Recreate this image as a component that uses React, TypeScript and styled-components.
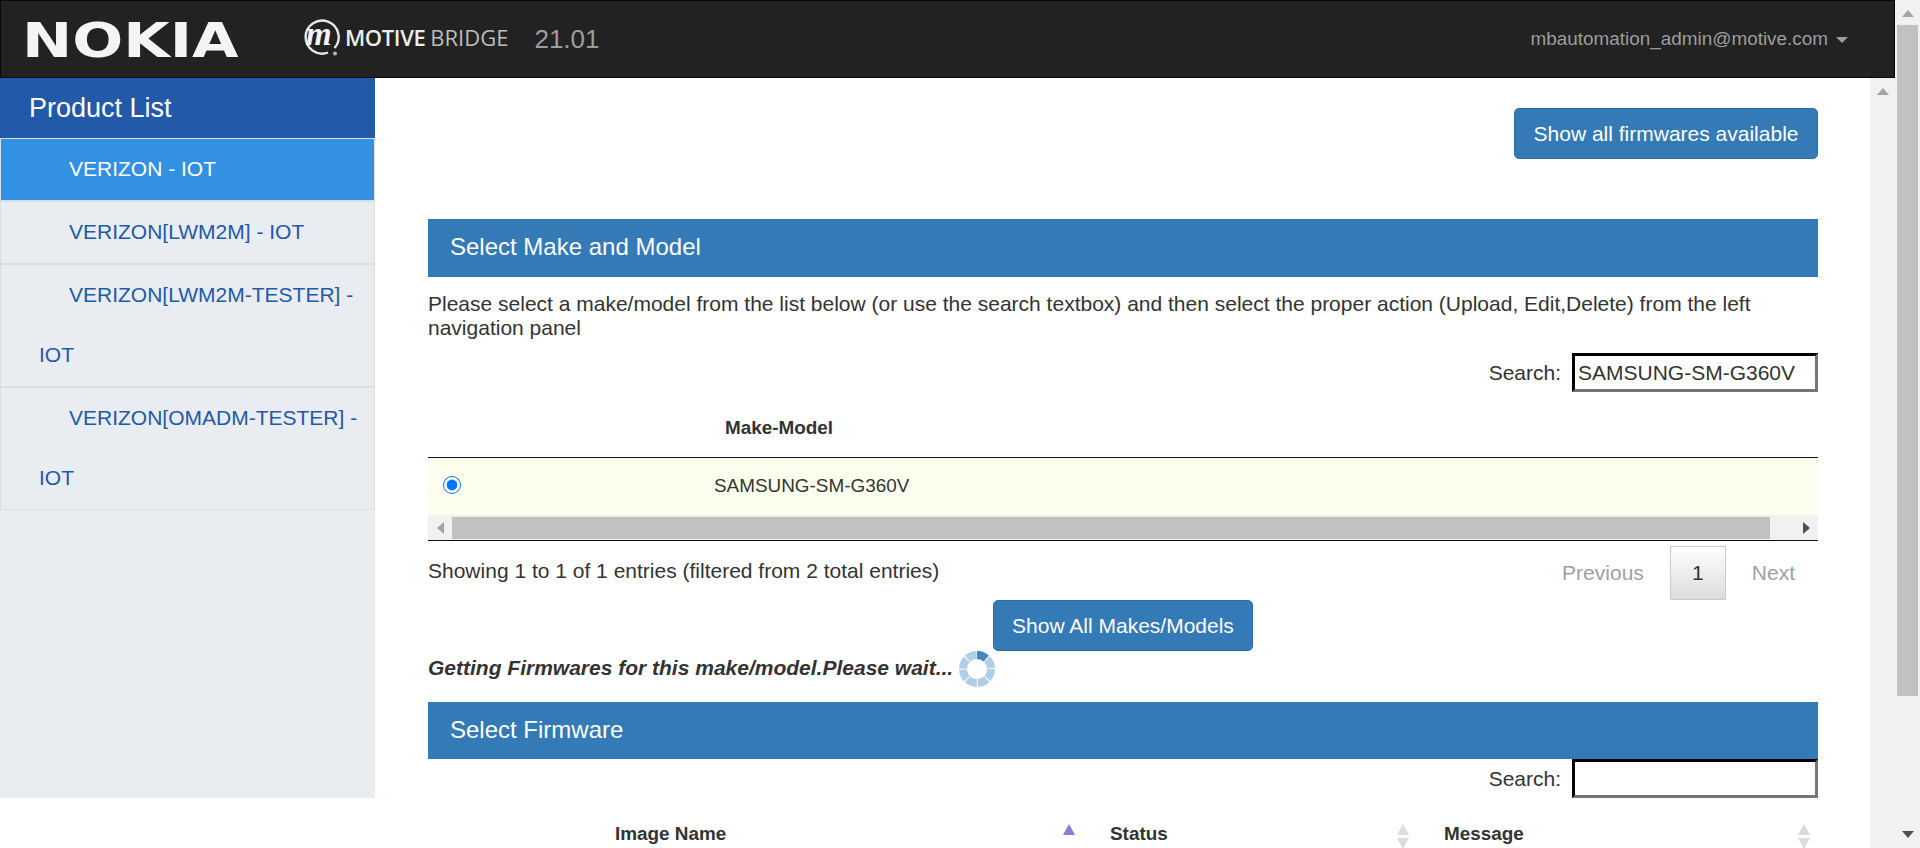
import styled, { createGlobalStyle } from 'styled-components';

const GlobalStyle = createGlobalStyle`
  html, body {
    margin: 0;
    padding: 0;
    height: 100%;
    overflow: hidden;
    background: #ffffff;
  }
  body {
    font-family: "Liberation Sans", Arial, sans-serif;
    font-size: 21px;
    color: #333333;
  }
  * {
    box-sizing: border-box;
  }
`;

const PRODUCTS = [
  'VERIZON - IOT',
  'VERIZON[LWM2M] - IOT',
  'VERIZON[LWM2M-TESTER] - IOT',
  'VERIZON[OMADM-TESTER] - IOT',
];

const FIRMWARE_COLUMNS = [
  { title: 'Image Name', active: true },
  { title: 'Status', active: false },
  { title: 'Message', active: false },
];

function MotiveMark() {
  return (
    <svg width="37" height="48" viewBox="0 -6 37 48">
      <path
        d="M31.5 27 A16.5 16.5 0 1 0 25 31.5"
        fill="none"
        stroke="#e8e8e8"
        strokeWidth="2.4"
      />
      <circle cx="32" cy="32.5" r="2" fill="#b5b5b5" />
      <text
        x="3"
        y="24"
        fill="#f4f4f4"
        fontFamily="Liberation Serif, serif"
        fontStyle="italic"
        fontWeight="700"
        fontSize="33"
      >
        m
      </text>
    </svg>
  );
}

function Spinner() {
  return (
    <svg width="36" height="36" viewBox="0 0 36 36">
      <g transform="rotate(-90 18 18)" fill="none" strokeWidth="8">
        <circle cx="18" cy="18" r="14" stroke="#afcfe7" strokeDasharray="10 0.996" />
        <circle cx="18" cy="18" r="14" stroke="#4189c3" strokeDasharray="10 77.96" />
      </g>
    </svg>
  );
}

function App() {
  return (
    <Page>
      <GlobalStyle />
      <Window>
        <Navbar>
          <Brand>
            <NokiaWord>NOKIA</NokiaWord>
            <MotiveMark />
            <MotiveWord>MOTIVE</MotiveWord>
            <BridgeWord>BRIDGE</BridgeWord>
            <Version>21.01</Version>
          </Brand>
          <UserMenu>
            mbautomation_admin@motive.com
            <Caret />
          </UserMenu>
        </Navbar>
        <Body>
          <Sidebar>
            <SidebarTitle>Product List</SidebarTitle>
            {PRODUCTS.map((name, index) => (
              <ProductItem key={name} $active={index === 0}>
                {name}
              </ProductItem>
            ))}
          </Sidebar>
          <Content>
            <TopActions>
              <Button>Show all firmwares available</Button>
            </TopActions>
            <SectionHeader $top={60} $height={58}>
              Select Make and Model
            </SectionHeader>
            <Help>
              Please select a make/model from the list below (or use the search
              textbox) and then select the proper action (Upload, Edit,Delete)
              from the left navigation panel
            </Help>
            <SearchRow $top={13}>
              Search:
              <SearchInput readOnly value="SAMSUNG-SM-G360V" />
            </SearchRow>
            <MakeHead>Make-Model</MakeHead>
            <MakeRow>
              <Radio type="radio" checked readOnly />
              <MakeCell>SAMSUNG-SM-G360V</MakeCell>
            </MakeRow>
            <TableScrollbar>
              <LeftArrowSlot>
                <Arrow $dir="left" $color="#a3a3a3" />
              </LeftArrowSlot>
              <HThumb />
              <RightArrowSlot>
                <Arrow $dir="right" $color="#505050" />
              </RightArrowSlot>
            </TableScrollbar>
            <TableFooter>
              <Info>Showing 1 to 1 of 1 entries (filtered from 2 total entries)</Info>
              <Pagination>
                <PageLink>Previous</PageLink>
                <CurrentPage>1</CurrentPage>
                <PageLink>Next</PageLink>
              </Pagination>
            </TableFooter>
            <CenterActions>
              <Button>Show All Makes/Models</Button>
            </CenterActions>
            <WaitRow>
              <WaitText>Getting Firmwares for this make/model.Please wait...</WaitText>
              <Spinner />
            </WaitRow>
            <SectionHeader $top={15} $height={57}>
              Select Firmware
            </SectionHeader>
            <SearchRow $top={0}>
              Search:
              <SearchInput readOnly value="" />
            </SearchRow>
            <FirmwareHead>
              {FIRMWARE_COLUMNS.map((column) => (
                <FirmwareColumn key={column.title}>
                  {column.title}
                  <SortIcon>
                    <SortUp $active={column.active} />
                    {!column.active && <SortDown />}
                  </SortIcon>
                </FirmwareColumn>
              ))}
            </FirmwareHead>
          </Content>
          <InnerScrollbar>
            <Arrow $dir="up" $color="#a3a3a3" />
          </InnerScrollbar>
        </Body>
      </Window>
      <OuterScrollbar>
        <Arrow $dir="up" $color="#a3a3a3" />
        <OuterThumb />
        <Arrow $dir="down" $color="#505050" />
      </OuterScrollbar>
    </Page>
  );
}

const Page = styled.div`
  display: flex;
  width: 1920px;
  height: 848px;
  overflow: hidden;
`;

const Window = styled.div`
  flex: 1;
  min-width: 0;
  display: flex;
  flex-direction: column;
`;

const Navbar = styled.header`
  height: 78px;
  flex: none;
  display: flex;
  align-items: center;
  justify-content: space-between;
  padding: 0 46px 0 25px;
  background: #222222;
  border: 1px solid #080808;
`;

const Brand = styled.div`
  display: flex;
  align-items: center;
`;

const NokiaWord = styled.span`
  width: 216px;
  margin: 2px 65px 0 -4px;
  font-family: "DejaVu Sans", sans-serif;
  font-size: 48px;
  font-weight: 700;
  line-height: 48px;
  color: #f4f4f4;
  transform: scaleX(1.25);
  transform-origin: left center;
`;

const MotiveWord = styled.span`
  margin: 0 0 4px 5px;
  font-family: "Open Sans", sans-serif;
  font-size: 22px;
  font-weight: 600;
  letter-spacing: -0.4px;
  color: #ececec;
`;

const BridgeWord = styled.span`
  margin: 0 0 4px 5px;
  font-family: "Open Sans", sans-serif;
  font-size: 22px;
  color: #bcbcbc;
`;

const Version = styled.span`
  margin-left: 26px;
  font-size: 26px;
  color: #9d9d9d;
`;

const UserMenu = styled.div`
  display: flex;
  align-items: center;
  gap: 8px;
  font-size: 18.9px;
  color: #9d9d9d;
`;

const Caret = styled.span`
  width: 0;
  height: 0;
  margin-top: 2px;
  border-top: 6px solid #9d9d9d;
  border-left: 6px solid transparent;
  border-right: 6px solid transparent;
`;

const Body = styled.div`
  flex: 1;
  min-height: 0;
  display: flex;
`;

const Sidebar = styled.nav`
  width: 375px;
  height: 720px;
  flex: none;
  background: #e9ecf1;
`;

const SidebarTitle = styled.div`
  height: 60px;
  padding-left: 29px;
  line-height: 60px;
  font-size: 27px;
  color: #ffffff;
  background: #2359a9;
`;

const ProductItem = styled.div<{ $active: boolean }>`
  padding: 0 14px 1px 38px;
  text-indent: 30px;
  font-size: 21px;
  line-height: 60px;
  color: ${(props) => (props.$active ? '#ffffff' : '#2359a9')};
  background: ${(props) => (props.$active ? '#3391e4' : '#e9ecf1')};
  border: 1px solid #dcdde0;
  border-bottom-width: 2px;
  border-top-width: ${(props) => (props.$active ? '1px' : '0')};
  &:last-child {
    border-bottom-width: 1px;
  }
`;

const Content = styled.main`
  flex: 1;
  min-width: 0;
  overflow: hidden;
  padding: 30px 52px 0 53px;
`;

const TopActions = styled.div`
  display: flex;
  justify-content: flex-end;
`;

const CenterActions = styled.div`
  display: flex;
  justify-content: center;
`;

const Button = styled.button`
  height: 51px;
  padding: 0 18.5px;
  font-family: inherit;
  font-size: 21px;
  color: #ffffff;
  background: #337ab7;
  border: 1px solid #2e6da4;
  border-radius: 5px;
`;

const SectionHeader = styled.h2<{ $top: number; $height: number }>`
  height: ${(props) => props.$height}px;
  margin: ${(props) => props.$top}px 0 0;
  padding-left: 22px;
  line-height: 55px;
  font-size: 24px;
  font-weight: 400;
  color: #ffffff;
  background: #337ab7;
`;

const Help = styled.p`
  margin: 15px 0 0;
  line-height: 24px;
`;

const SearchRow = styled.label<{ $top: number }>`
  display: flex;
  justify-content: flex-end;
  align-items: center;
  gap: 11px;
  margin-top: ${(props) => props.$top}px;
`;

const SearchInput = styled.input`
  width: 246px;
  height: 39px;
  padding: 0 3px;
  font-family: inherit;
  font-size: 21px;
  color: #333333;
  background: #ffffff;
  border: 3px inset #767676;
  border-top-color: #222222;
  border-left-color: #222222;
  outline: none;
`;

const MakeHead = styled.div`
  height: 66px;
  padding: 25px 0 0 297px;
  font-size: 18.9px;
  font-weight: 700;
  line-height: 22px;
  border-bottom: 1px solid #111111;
`;

const MakeRow = styled.div`
  height: 57px;
  display: flex;
  align-items: center;
  background: #fdffee;
`;

const Radio = styled.input`
  width: 18px;
  height: 18px;
  margin: -3px 0 0 15px;
  accent-color: #0075ff;
`;

const MakeCell = styled.span`
  margin: -2px 0 0 253px;
  font-size: 18.9px;
`;

const TableScrollbar = styled.div`
  height: 26px;
  display: flex;
  align-items: center;
  background: #f1f1f1;
  border-bottom: 1px solid #111111;
`;

const LeftArrowSlot = styled.span`
  width: 24px;
  flex: none;
  display: flex;
  justify-content: center;
`;

const RightArrowSlot = styled.span`
  width: 48px;
  flex: none;
  display: flex;
  justify-content: flex-end;
  padding-right: 8px;
`;

const HThumb = styled.span`
  flex: 1;
  height: 22px;
  background: #c1c1c1;
`;

const TableFooter = styled.div`
  display: flex;
  justify-content: space-between;
`;

const Info = styled.div`
  margin-top: 18px;
  line-height: 24px;
`;

const Pagination = styled.div`
  display: flex;
  align-items: center;
  gap: 26px;
  margin: 5px 23px 0 0;
`;

const PageLink = styled.span`
  color: #a0a0a0;
`;

const CurrentPage = styled.span`
  width: 56px;
  height: 54px;
  display: flex;
  align-items: center;
  justify-content: center;
  background: linear-gradient(to bottom, #ffffff 0%, #dcdcdc 100%);
  border: 1px solid #cacaca;
`;

const WaitRow = styled.div`
  height: 36px;
  display: flex;
  align-items: center;
  gap: 6px;
`;

const WaitText = styled.em`
  margin-bottom: 3px;
  font-weight: 700;
`;

const FirmwareHead = styled.div`
  display: grid;
  grid-template-columns: 668px 334px 388px;
  margin-top: 25px;
`;

const FirmwareColumn = styled.div`
  display: flex;
  justify-content: space-between;
  padding: 0 21px 0 14px;
  font-size: 18.9px;
  font-weight: 700;
  line-height: 22px;
  &:first-child {
    padding-left: 187px;
  }
  &:last-child {
    padding-right: 8px;
  }
`;

const SortIcon = styled.span`
  display: flex;
  flex-direction: column;
  gap: 3px;
  padding-top: 1px;
`;

const SortUp = styled.span<{ $active: boolean }>`
  display: block;
  width: 0;
  height: 0;
  border-left: 6.5px solid transparent;
  border-right: 6.5px solid transparent;
  border-bottom: 11px solid ${(props) => (props.$active ? '#7f7fdc' : '#dcdcdc')};
`;

const SortDown = styled.span`
  display: block;
  width: 0;
  height: 0;
  border-left: 6.5px solid transparent;
  border-right: 6.5px solid transparent;
  border-top: 11px solid #dcdcdc;
`;

const arrowBorders = (dir: string, color: string) => {
  const side = `6px solid transparent`;
  const main = `7px solid ${color}`;
  if (dir === 'up') return `border-left: ${side}; border-right: ${side}; border-bottom: ${main};`;
  if (dir === 'down') return `border-left: ${side}; border-right: ${side}; border-top: ${main};`;
  if (dir === 'left') return `border-top: ${side}; border-bottom: ${side}; border-right: ${main};`;
  return `border-top: ${side}; border-bottom: ${side}; border-left: ${main};`;
};

const Arrow = styled.span<{ $dir: string; $color: string }>`
  display: block;
  width: 0;
  height: 0;
  ${(props) => arrowBorders(props.$dir, props.$color)}
`;

const InnerScrollbar = styled.div`
  width: 25px;
  flex: none;
  display: flex;
  justify-content: center;
  padding-top: 10px;
  background: #f1f1f1;
`;

const OuterScrollbar = styled.div`
  width: 25px;
  flex: none;
  display: flex;
  flex-direction: column;
  align-items: center;
  padding: 10px 0;
  background: #f1f1f1;
`;

const OuterThumb = styled.div`
  width: 21px;
  height: 671px;
  margin: 8px 0 auto;
  background: #c1c1c1;
`;

export default App;
